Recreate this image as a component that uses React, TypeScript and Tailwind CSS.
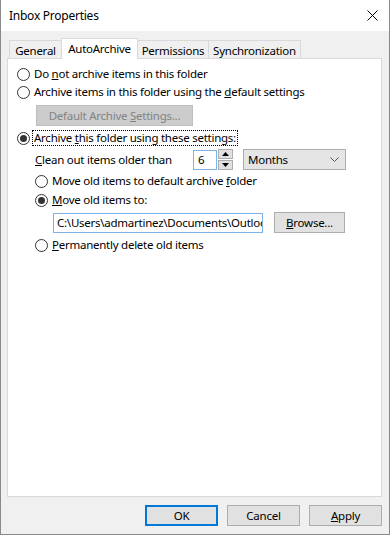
import { ReactNode } from "react";

function Radio({ checked = false }: { checked?: boolean }) {
  return (
    <span className="w-[13px] h-[13px] rounded-full border border-[#333333] bg-white flex items-center justify-center shrink-0">
      {checked && <span className="w-[7px] h-[7px] rounded-full bg-[#333333]" />}
    </span>
  );
}

function RadioRow({ checked, children, className = "" }: { checked?: boolean; children: ReactNode; className?: string }) {
  return (
    <div className={"flex items-center h-[16px] " + className}>
      <Radio checked={checked} />
      <span className="ml-[4px] leading-[16px]">{children}</span>
    </div>
  );
}

function Btn({ children, primary = false, className = "" }: { children: ReactNode; primary?: boolean; className?: string }) {
  return (
    <div
      className={
        "h-[21px] flex items-center justify-center bg-[#e1e1e1] " +
        (primary ? "border-2 border-[#0078d7] " : "border border-[#adadad] ") +
        className
      }
    >
      <span>{children}</span>
    </div>
  );
}

export default function App() {
  return (
    <div
      className="w-[390px] h-[535px] bg-[#f0f0f0] border-l border-r border-b border-[#8a8a8a] flex flex-col text-[11.5px] tracking-[-0.25px] text-black overflow-hidden"
      style={{ fontFamily: "'Noto Sans', 'Open Sans', sans-serif" }}
    >
      {/* title bar */}
      <div className="h-[31px] bg-white flex items-center justify-between pl-[8px] pr-[9px] shrink-0">
        <span className="text-[12px] leading-none">Inbox Properties</span>
        <svg width="11" height="11" viewBox="0 0 11 11" className="mr-[2px]">
          <path d="M0.5 0.5 L10.5 10.5 M10.5 0.5 L0.5 10.5" stroke="#000" strokeWidth="1" />
        </svg>
      </div>

      {/* tabs */}
      <div className="flex items-end h-[27px] pl-[8px] pt-[7px] relative z-10">
        <div className="h-[18px] flex items-center border-t border-l border-[#d9d9d9] bg-[#f0f0f0] w-[52px] justify-center pt-[2px]">
          General
        </div>
        <div className="h-[21px] -mb-px flex items-center border-t border-l border-r border-[#d9d9d9] bg-white w-[77px] justify-center pb-[1px]">
          AutoArchive
        </div>
        <div className="h-[18px] flex items-center border-t border-[#d9d9d9] bg-[#f0f0f0] w-[70px] justify-center pt-[2px]">
          Permissions
        </div>
        <div className="h-[18px] flex items-center border-t border-l border-r border-[#d9d9d9] bg-[#f0f0f0] w-[93px] justify-center pt-[2px]">
          Synchronization
        </div>
      </div>

      {/* panel */}
      <div className="ml-[6px] w-[375px] h-[439px] bg-white border border-[#d9d9d9] flex flex-col pl-[9px]">
        <RadioRow className="mt-[7px]">
          Do <u>n</u>ot archive items in this folder
        </RadioRow>
        <RadioRow className="mt-[2px]">
          Archive items in this folder using the <u>d</u>efault settings
        </RadioRow>
        <div className="mt-[5px] ml-[19px] w-[157px] h-[21px] flex items-center justify-center bg-[#cccccc] border border-[#bfbfbf] text-[#838383]">
          <span>
            Default Archive <u>S</u>ettings...
          </span>
        </div>
        <div className="mt-[4px] flex items-center h-[16px]">
          <Radio checked />
          <span className="ml-[2px] px-[1px] leading-[14px] border border-dotted border-black">
            Archive <u>t</u>his folder using these settings:
          </span>
        </div>

        <div className="mt-[3px] ml-[18px] flex items-center h-[21px]">
          <span className="w-[158px]">
            <u>C</u>lean out items older than
          </span>
          <div className="w-[24px] h-[20px] border border-[#7eb4ea] flex items-center pl-[4px]">6</div>
          <div className="ml-[1px] flex flex-col gap-[1px]">
            <div className="w-[15px] h-[10px] bg-[#e1e1e1] border border-[#adadad] flex items-center justify-center">
              <svg width="7" height="4" viewBox="0 0 7 4">
                <path d="M3.5 0 L7 4 L0 4 Z" fill="#000" />
              </svg>
            </div>
            <div className="w-[15px] h-[10px] bg-[#e1e1e1] border border-[#adadad] flex items-center justify-center">
              <svg width="7" height="4" viewBox="0 0 7 4">
                <path d="M0 0 L7 0 L3.5 4 Z" fill="#000" />
              </svg>
            </div>
          </div>
          <div className="ml-[10px] w-[103px] h-[21px] bg-[#e5e5e5] border border-[#adadad] flex items-center justify-between pl-[4px] pr-[6px]">
            <span>Months</span>
            <svg width="9" height="5" viewBox="0 0 9 5">
              <path d="M0.5 0.5 L4.5 4.5 L8.5 0.5" stroke="#555" strokeWidth="1" fill="none" />
            </svg>
          </div>
        </div>

        <RadioRow className="mt-[3px] ml-[18px]">
          Move old items to default archive <u>f</u>older
        </RadioRow>
        <RadioRow checked className="mt-[3px] ml-[18px]">
          <u>M</u>ove old items to:
        </RadioRow>
        <div className="mt-[4px] ml-[36px] flex items-center h-[21px]">
          <div className="w-[210px] h-[20px] border border-[#7eb4ea] pl-[3px] overflow-hidden whitespace-nowrap leading-[18px]">
            C:\Users\admartinez\Documents\Outloo
          </div>
          <Btn className="ml-[11px] w-[71px]">
            <u>B</u>rowse...
          </Btn>
        </div>
        <RadioRow className="mt-[4px] ml-[18px]">
          <u>P</u>ermanently delete old items
        </RadioRow>
      </div>

      {/* buttons */}
      <div className="mt-[8px] flex justify-end gap-[9px] pr-[7px]">
        <Btn primary className="w-[73px]">
          OK
        </Btn>
        <Btn className="w-[73px]">Cancel</Btn>
        <Btn className="w-[73px]">
          <u>A</u>pply
        </Btn>
      </div>
    </div>
  );
}
